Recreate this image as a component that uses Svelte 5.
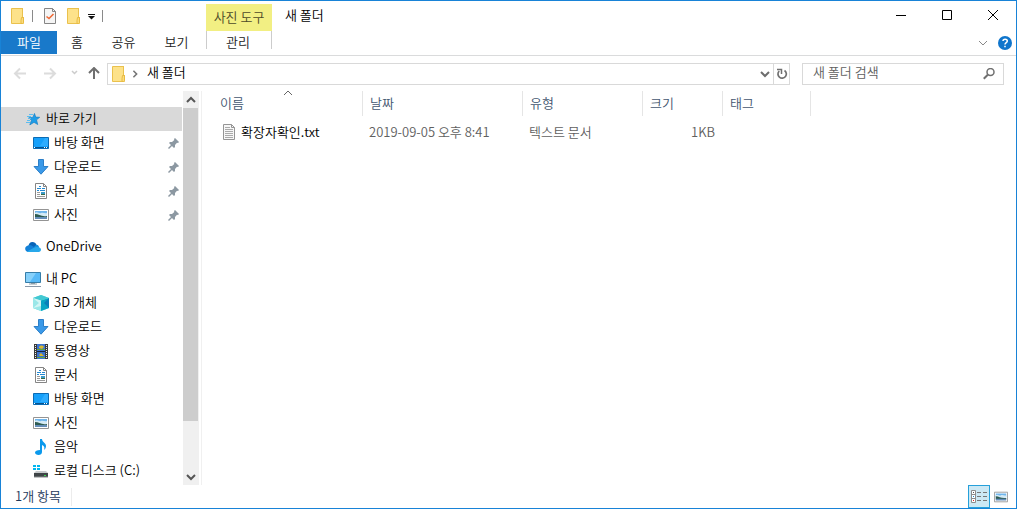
<script>
	const quickAccess = [
		{ icon: "desktop", label: "바탕 화면" },
		{ icon: "download", label: "다운로드" },
		{ icon: "document", label: "문서" },
		{ icon: "picture", label: "사진" },
	]

	const thisPc = [
		{ icon: "cube", label: "3D 개체" },
		{ icon: "download", label: "다운로드" },
		{ icon: "video", label: "동영상" },
		{ icon: "document", label: "문서" },
		{ icon: "desktop", label: "바탕 화면" },
		{ icon: "picture", label: "사진" },
		{ icon: "music", label: "음악" },
		{ icon: "disk", label: "로컬 디스크 (C:)" },
	]

	const files = [{ name: "확장자확인.txt", date: "2019-09-05 오후 8:41", type: "텍스트 문서", size: "1KB", tag: "" }]

	let search = $state("")
	let view = $state("details")
</script>

{#snippet icon(name)}
	<svg class="icon" viewBox="0 0 16 16" width="16" height="16" aria-hidden="true">
		{#if name === "folder"}
			<path d="M2.5.5h12v15h-12z" fill="#fde28a" stroke="#eac14d" />
			<path d="M14 0h1v9h-1z" fill="#fff" />
			<path d="M13.500.5v9" stroke="#eac14d" />
			<path d="M12.500 9.500h2v5l-1 1h-1.500v-3z" fill="#fbdc7c" stroke="#e8bb42" />
		{:else if name === "check"}
			<path d="M2.5.5h8l3 3v12h-11z" fill="#f5f5f5" stroke="#858585" />
			<path d="M10.5.5v3h3" fill="none" stroke="#858585" />
			<path d="M4.5 8.500l2.500 2 4.500-4.500" fill="none" stroke="#ee6a38" stroke-width="1.600" />
		{:else if name === "star"}
			<path d="M9.500 2.500l1.200 3.600 4 .2-3.200 2.500 1.200 4.700L9 11.300l-4.200 2.600 1.700-4.600L3.800 6.700l4-.3z" fill="#1e9de8" stroke="#1580c4" stroke-width=".7" />
			<path d="M4 3.500h4M2 5.500h4M3 7.500h3M2 9.500h3M1 11.500h4" stroke="#5cbdf0" />
		{:else if name === "desktop"}
			<path d="M.5 2.500h15v11H.5z" fill="#16a0fa" stroke="#0b6bb4" />
			<path d="M12 3h3v8H7z" fill="#2fadff" />
			<path d="M1 12h14v1H1z" fill="#07528d" />
			<path d="M1 12.500h1M11 12.500h1M13 12.500h1" stroke="#fff" />
		{:else if name === "download"}
			<path d="M5.500.5h5v7h4.500L8 15.200 1 7.500h4.500z" fill="#3a99e8" stroke="#2c7fc8" />
		{:else if name === "document"}
			<path d="M2.500.5h8l3 3v12h-11z" fill="#fff" stroke="#858585" />
			<path d="M10.500.5v3h3" fill="none" stroke="#858585" />
			<path d="M6 3.500h2M4 5.500h4M9 5.500h3M4 7.500h2M7 7.500h5" stroke="#2489d2" />
			<path d="M4 9.500h3M4 11.500h3M4 13.500h8" stroke="#9a9a9a" />
			<path d="M8 9h4v3H8z" fill="#3c9ac8" />
			<path d="M8 11h4v1H8z" fill="#396a45" />
		{:else if name === "picture"}
			<path d="M.5 2.500h15v11H.5z" fill="#fff" stroke="#949494" />
			<path d="M2 4h12v4H2z" fill="#6fb5ec" />
			<path d="M2 6c2-2 4 1 6 0s4 1 6 0v3H2z" fill="#d4eaf5" />
			<path d="M2 7c4 0 6 3 12 2v1.500H2z" fill="#2d5b51" />
			<path d="M2 10h12v2H2z" fill="#648db8" />
		{:else if name === "cloud"}
			<path d="M3.500 7.500C3.500 5 5 3 7.500 3c2 0 3.200 1 3.900 2.700L14 8l-5 4z" fill="#0864b8" />
			<path d="M3 6.500C4.500 5.500 6 6 7 6.700L12 10l-9 3C-1 12-.5 7 3 6.500z" fill="#1381d8" />
			<path d="M11 6c1.500-.5 2.500.5 2.800 2L14 9l-5-1z" fill="#1490df" />
			<path d="M2 12.500L8.500 9c1-.7 2-1.200 3-1 3.500-.5 5.500 2 4 4-.6.8-1.300 1-2 1H4c-.8 0-1.500 0-2-.5z" fill="#28a8ea" />
		{:else if name === "pc"}
			<path d="M.5 1.500h15v10H.5z" fill="#57b9f7" stroke="#367da8" />
			<path d="M1 2h10L5 11H1z" fill="#86d0fa" />
			<path d="M6 12h4v1H6zM4 12.500h8v1H4z" fill="#8d9da8" />
			<path d="M0 15.500h16" stroke="#8998a8" />
		{:else if name === "cube"}
			<path d="M8 0l8 3v10l-8 3-8-3V3z" fill="#55d5dd" />
			<path d="M0 3l8 2.500V16l-8-3z" fill="#9ae7e8" />
			<path d="M8 5.500L16 3v10l-8 3z" fill="#08a5c4" />
			<path d="M0 3l8-3 8 3-8 2.500z" fill="#43c8d2" />
			<path d="M8 5.500v5.500L0 13l6-5-6-5z" fill="#d3f5f4" />
			<path d="M16 3v10l-5-5z" fill="#087fb9" />
		{:else if name === "video"}
			<path d="M1 1h14v15H1z" fill="#3b3b3b" />
			<path d="M4 1h8v15H4z" fill="#3c74cf" />
			<path d="M2.500 2v13M13.500 2v13" stroke="#eee" stroke-dasharray="1 1" />
			<path d="M6 4c1-2 4-2 5 0L9 6 6 5zM6 12l2-2 3 3H7z" fill="#d9b72c" />
			<path d="M4 6h8v1H4zM4 14h8v1H4z" fill="#60a43d" />
			<path d="M4 8.500h8" stroke="#18253d" />
		{:else if name === "music"}
			<path d="M7 0h2c0 3 4 4 4 7 0 2-1 3-2 4 1-3 0-4-2-5v7c0 2-1.500 3-3.500 3S2 15 2 13.500 4 11 7 11z" fill="#0b99ec" />
		{:else if name === "disk"}
			<path d="M0 2h3v2H0zM4 2h3v2H4zM0 5h3v2H0zM4 5h3v2H4z" fill="#00b7f0" />
			<path d="M3 8h10l2 2H1z" fill="#c6c9cb" />
			<path d="M1 10h14v4H1z" fill="#3f4447" />
			<path d="M11 12.500h2" stroke="#37d64b" />
			<path d="M1 14h14" stroke="#85898b" />
		{:else if name === "text"}
			<path d="M2.500.5h8l3 3v12h-11z" fill="#f7f7f7" stroke="#959595" />
			<path d="M10.500.5v3h3" fill="none" stroke="#959595" />
			<path d="M4 3.500h5M4 5.500h8M4 7.500h8M4 9.500h8M4 11.500h8M4 13.500h8" stroke="#aaa" />
		{/if}
	</svg>
{/snippet}

{#snippet chevron(dir, color, weight)}
	<svg class="chevron {dir}" viewBox="0 0 10 10" width="10" height="10" aria-hidden="true">
		<path d="M1 3l4 4 4-4" fill="none" stroke={color} stroke-width={weight} />
	</svg>
{/snippet}

<div class="window">
	<header class="titlebar">
		<div class="quick-tools">
			{@render icon("folder")}
			<span class="tick"></span>
			<button class="properties" aria-label="속성">{@render icon("check")}</button>
			<button aria-label="새 폴더">{@render icon("folder")}</button>
			<button aria-label="빠른 실행 도구 모음 사용자 지정">
				<svg viewBox="0 0 7 7" width="7" height="7"><path d="M0 1.500h7" stroke="#111" /><path d="M0 3h7L3.500 6.500z" fill="#111" /></svg>
			</button>
			<span class="tick"></span>
		</div>
		<div class="tool-group">사진 도구</div>
		<h1>새 폴더</h1>
		<div class="caption-buttons">
			<button aria-label="최소화"><svg viewBox="0 0 12 12" width="12" height="12"><path d="M1 5.500h10" stroke="#000" /></svg></button>
			<button aria-label="최대화"><svg viewBox="0 0 12 12" width="12" height="12"><path d="M1.500.5h9v9h-9z" fill="none" stroke="#000" /></svg></button>
			<button aria-label="닫기"><svg viewBox="0 0 12 12" width="12" height="12"><path d="M1 0l10 10M11 0L1 10" stroke="#000" /></svg></button>
		</div>
	</header>

	<nav class="ribbon">
		<button class="file-tab">파일</button>
		<button class="home-tab">홈</button>
		<button>공유</button>
		<button>보기</button>
		<button class="manage-tab">관리</button>
		<div class="ribbon-end">
			<button aria-label="리본 확장">{@render chevron("down", "#888", 1)}</button>
			<button aria-label="도움말">
				<svg viewBox="0 0 14 14" width="14" height="14">
					<circle cx="7" cy="7" r="7" fill="#0f75cc" />
					<path d="M5 5c0-2.500 4.300-2.500 4.300 0C9.300 6.700 7 6.500 7 8.500M7 9.700v1.600" fill="none" stroke="#fff" stroke-width="1.500" />
				</svg>
			</button>
		</div>
	</nav>

	<div class="address-row">
		<div class="history">
			<button aria-label="뒤로"><svg viewBox="0 0 14 14" width="14" height="14"><path d="M13 6.500H2M7 1.500l-5 5 5 5" fill="none" stroke="#dcdcdc" stroke-width="2" /></svg></button>
			<button aria-label="앞으로"><svg viewBox="0 0 14 14" width="14" height="14"><path d="M1 6.500h11M7 1.500l5 5-5 5" fill="none" stroke="#dcdcdc" stroke-width="2" /></svg></button>
			<button class="recent" aria-label="최근 위치"><svg viewBox="0 0 7 7" width="7" height="7"><path d="M1 1l2.500 2.500L6 1" fill="none" stroke="#ccc" stroke-width="1.500" /></svg></button>
			<button aria-label="위로"><svg viewBox="0 0 14 14" width="14" height="14"><path d="M6 12V1M1 6l5-5 5 5" fill="none" stroke="#6f6f6f" stroke-width="2" /></svg></button>
		</div>
		<div class="address">
			{@render icon("folder")}
			<span class="crumb-arrow">{@render chevron("right", "#777", 2)}</span>
			<button class="crumb">새 폴더</button>
			<button class="address-drop" aria-label="이전 위치">{@render chevron("down", "#6d6d6d", 2)}</button>
			<button class="refresh" aria-label="새로 고침">
				<svg viewBox="0 0 12 12" width="12" height="12">
					<path d="M8.500 2.500A4.200 4.200 0 1 1 3.200 3" fill="none" stroke="#707070" stroke-width="1.700" />
					<path d="M1 1.500h4.500V6" fill="none" stroke="#707070" stroke-width="1.500" />
				</svg>
			</button>
		</div>
		<label class="search">
			<input type="text" placeholder="새 폴더 검색" aria-label="새 폴더 검색" bind:value={search} />
			<svg viewBox="0 0 12 12" width="12" height="12" aria-hidden="true">
				<circle cx="7.500" cy="4" r="3.500" fill="none" stroke="#707070" stroke-width="1.500" />
				<path d="M5 6.500L.8 10.700" stroke="#707070" stroke-width="2" />
			</svg>
		</label>
	</div>

	<div class="content">
		<aside class="tree">
			<a class="node root selected" href="#quick">{@render icon("star")}<span>바로 가기</span></a>
			{#each quickAccess as item}
				<a class="node" href="#{item.icon}">
					{@render icon(item.icon)}<span>{item.label}</span>
					<svg class="pin" viewBox="0 0 11 11" width="11" height="11" aria-hidden="true">
						<path d="M7 0l4 4-1 1-1-.3L7 7v2L6 10 1 5l1-1h2l2.300-2L6 1z" fill="#8c98a2" />
						<path d="M4 7L.5 10.500" stroke="#8c98a2" stroke-width="1.400" />
					</svg>
				</a>
			{/each}
			<a class="node root spaced" href="#onedrive">{@render icon("cloud")}<span>OneDrive</span></a>
			<a class="node root spaced" href="#pc">{@render icon("pc")}<span>내 PC</span></a>
			{#each thisPc as item}
				<a class="node" href="#{item.icon}">{@render icon(item.icon)}<span>{item.label}</span></a>
			{/each}
		</aside>
		<div class="scrollbar">
			<button aria-label="위로 스크롤">{@render chevron("up", "#555", 2)}</button>
			<div class="track"><div class="thumb"></div></div>
			<button aria-label="아래로 스크롤">{@render chevron("down", "#555", 2)}</button>
		</div>
		<main class="files">
			<table>
				<colgroup>
					<col class="col-name" />
					<col class="col-date" />
					<col class="col-type" />
					<col class="col-size" />
					<col class="col-tag" />
				</colgroup>
				<thead>
					<tr>
						<th class="sorted">이름<span class="sort-mark">{@render chevron("up", "#666", 1)}</span></th>
						<th>날짜</th>
						<th>유형</th>
						<th>크기</th>
						<th>태그</th>
					</tr>
				</thead>
				<tbody>
					{#each files as file}
						<tr>
							<td><div class="file-name">{@render icon("text")}{file.name}</div></td>
							<td>{file.date}</td>
							<td>{file.type}</td>
							<td class="size">{file.size}</td>
							<td>{file.tag}</td>
						</tr>
					{/each}
				</tbody>
			</table>
		</main>
	</div>

	<footer class="status">
		<span class="count">1개 항목</span>
		<div class="views">
			<button class:active={view === "details"} aria-label="자세히" onclick={() => (view = "details")}>
				<svg viewBox="0 0 16 14" width="16" height="14">
					<path d="M.5.5h4v12h-4zM.5 4.500h4M.5 8.500h4" fill="#fff" stroke="#8c8c8c" />
					<path d="M2 2h1v1H2z" fill="#555" />
					<path d="M2 6h1v1H2z" fill="#1c87c9" />
					<path d="M2 10h1v1H2z" fill="#e02020" />
					<path d="M6 2.500h4M12 2.500h4M6 6.500h4M12 6.500h4M6 10.500h4M12 10.500h4" stroke="#777" />
				</svg>
			</button>
			<button class:active={view === "large"} aria-label="큰 아이콘" onclick={() => (view = "large")}>{@render icon("picture")}</button>
		</div>
	</footer>
</div>

<style>
	:global(body) {
		margin: 0;
		background: #fff;
	}
	.window {
		display: flex;
		flex-direction: column;
		box-sizing: border-box;
		min-height: 100vh;
		border: 1px solid #1883d7;
		background: #fff;
		color: #000;
		font-family: "Noto Sans CJK KR", sans-serif;
		font-size: 13px;
		font-weight: 350;
		line-height: 16px;
	}
	button,
	input {
		padding: 0;
		border: 0;
		background: none;
		color: inherit;
		font: inherit;
	}
	svg {
		display: block;
		flex: none;
	}
	.up {
		transform: rotate(180deg);
	}
	.right {
		transform: rotate(-90deg);
	}

	/* title bar */
	.titlebar {
		display: flex;
		height: 30px;
	}
	.quick-tools {
		display: flex;
		align-items: center;
		box-sizing: border-box;
		gap: 7px;
		width: 205px;
		padding-left: 8px;
	}
	.tick {
		width: 1px;
		height: 12px;
		background: #8a8a8a;
	}
	.properties {
		margin-left: 2px;
	}
	.tool-group {
		box-sizing: border-box;
		width: 66px;
		margin-top: 3px;
		padding-top: 5px;
		background: #f2ef83;
		color: #4c4a28;
		text-align: center;
	}
	h1 {
		margin: 0 0 0 13px;
		font-size: 13px;
		font-weight: inherit;
		line-height: 28px;
	}
	.caption-buttons {
		display: flex;
		margin-left: auto;
	}
	.caption-buttons button {
		display: flex;
		align-items: center;
		justify-content: center;
		width: 46px;
	}

	/* ribbon */
	.ribbon {
		display: flex;
		height: 24px;
		border-bottom: 1px solid #dadbdc;
		color: #222;
	}
	.ribbon > button {
		width: 53px;
		height: 23px;
		padding-bottom: 2px;
	}
	.ribbon > .file-tab {
		width: 56px;
		background: #1979ca;
		color: #fff;
	}
	.ribbon > .home-tab {
		width: 40px;
	}
	.ribbon > .manage-tab {
		width: 66px;
		height: 18px;
		margin-left: 3px;
		padding: 3px 2px 0 0;
		border: solid #ccc;
		border-width: 0 1px;
	}
	.ribbon-end {
		display: flex;
		align-items: center;
		gap: 10px;
		margin-left: auto;
		padding-right: 4px;
	}

	/* address row */
	.address-row {
		display: flex;
		align-items: center;
		height: 35px;
		padding-right: 12px;
	}
	.history {
		display: flex;
		align-items: center;
		gap: 16px;
		width: 94px;
		padding-left: 12px;
	}
	.recent {
		margin-right: -6px;
		margin-left: -2px;
	}
	.address {
		display: flex;
		flex: 1;
		align-items: center;
		box-sizing: border-box;
		height: 22px;
		padding-left: 2px;
		border: 1px solid #d9d9d9;
	}
	.crumb-arrow {
		margin: 0 8px 0 5px;
	}
	.crumb-arrow svg {
		width: 8px;
		height: 8px;
	}
	.crumb {
		padding-bottom: 3px;
	}
	.address-drop {
		margin-left: auto;
		padding: 0 3px;
	}
	.refresh {
		display: flex;
		align-items: center;
		justify-content: center;
		width: 16px;
		height: 20px;
		border-left: 1px solid #d9d9d9;
	}
	.search {
		display: flex;
		align-items: center;
		box-sizing: border-box;
		width: 202px;
		height: 22px;
		margin-left: 12px;
		padding: 0 8px 0 10px;
		border: 1px solid #d9d9d9;
	}
	.search input {
		flex: 1;
		min-width: 0;
		padding-bottom: 3px;
		outline: 0;
	}
	.search input::placeholder {
		color: #606060;
		opacity: 1;
	}

	/* folder tree */
	.content {
		display: flex;
		flex: 1;
	}
	.tree {
		width: 181px;
		padding-top: 16px;
	}
	.node {
		display: flex;
		align-items: center;
		gap: 5px;
		height: 24px;
		padding: 0 3px 0 32px;
		color: #000;
		text-decoration: none;
		white-space: nowrap;
	}
	.node span {
		padding-bottom: 2px;
	}
	.node.root {
		padding-left: 24px;
	}
	.node.spaced {
		margin-top: 8px;
	}
	.node.selected {
		background: #d9d9d9;
	}
	.pin {
		margin-left: auto;
	}
	.scrollbar {
		display: flex;
		flex-direction: column;
		width: 16px;
		margin: 0 2px 0 1px;
		background: #f0f0f0;
	}
	.scrollbar button {
		display: flex;
		align-items: center;
		justify-content: center;
		height: 17px;
	}
	.track {
		flex: 1;
	}
	.thumb {
		width: 15px;
		height: 87%;
		background: #cdcdcd;
	}

	/* file list */
	.files {
		flex: 1;
		padding-left: 11px;
		border-left: 1px solid #f0f0f0;
	}
	table {
		width: 598px;
		border-collapse: separate;
		border-spacing: 0;
		table-layout: fixed;
	}
	.col-name {
		width: 150px;
	}
	.col-date {
		width: 160px;
	}
	.col-type {
		width: 120px;
	}
	.col-size {
		width: 80px;
	}
	.col-tag {
		width: 88px;
	}
	th {
		height: 23px;
		padding: 0 0 2px 7px;
		border-right: 1px solid #e5e5e5;
		color: #43566f;
		font-weight: inherit;
		text-align: left;
	}
	.sorted {
		position: relative;
	}
	.sort-mark {
		position: absolute;
		top: -3px;
		right: 0;
		left: 0;
	}
	.sort-mark svg {
		margin: 0 auto;
	}
	td {
		height: 22px;
		padding: 5px 0 0 6px;
		color: #606060;
		white-space: nowrap;
	}
	.file-name {
		display: flex;
		align-items: center;
		gap: 4px;
		padding-left: 2px;
		color: #000;
	}
	.size {
		padding-right: 8px;
		text-align: right;
	}

	/* status bar */
	.status {
		display: flex;
		align-items: center;
		height: 23px;
		color: #1e395b;
	}
	.count {
		padding: 0 10px 2px 14px;
		border-right: 1px solid #ececec;
	}
	.views {
		display: flex;
		margin-left: auto;
		padding-right: 4px;
	}
	.views button {
		display: flex;
		align-items: center;
		justify-content: center;
		box-sizing: border-box;
		width: 22px;
		height: 23px;
		border: 1px solid transparent;
	}
	.views .active {
		border-color: #26a0da;
		background: #cce8f4;
	}
	.views .icon {
		width: 14px;
		height: 14px;
	}
</style>
